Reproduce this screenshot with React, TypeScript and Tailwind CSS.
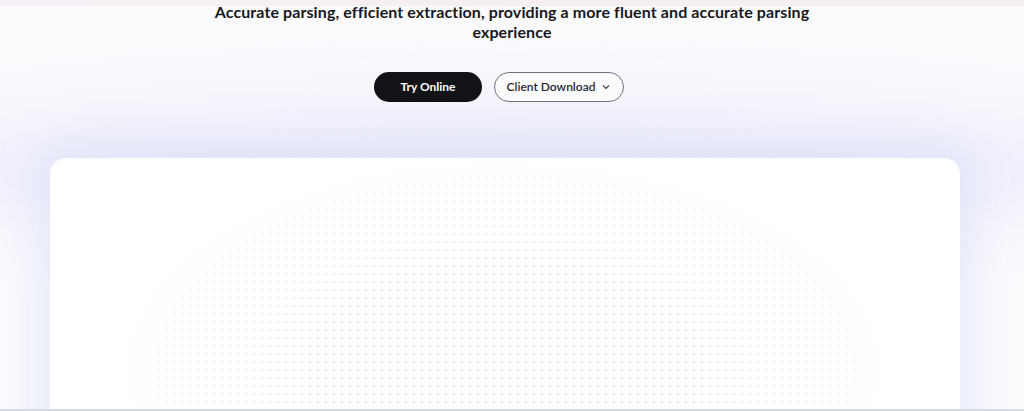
export default function App() {
  return (
    <div className="relative w-[1024px] h-[411px] overflow-hidden bg-[#fbfbfe]" style={{ fontFamily: 'Lato, "Noto Sans", sans-serif' }}>
      <div className="absolute inset-x-0 top-0 h-[6px] bg-gradient-to-r from-[#f6f0f6] via-[#f7eef2] to-[#f6eef0]" />
      <div className="absolute left-[-100px] right-[-100px] top-[110px] h-[120px] rounded-[50%] bg-[#e9e9fa] blur-[40px]" />
      <div className="relative flex flex-col items-center pt-[2px]">
        <h1 className="text-center text-[16px] leading-[20px] font-bold text-[#18181b] w-[640px] tracking-[0.1px]">
          Accurate parsing, efficient extraction, providing a more fluent and accurate parsing experience
        </h1>
        <div className="mt-[30px] flex gap-3 mr-[26px]">
          <button className="h-[30px] w-[108px] rounded-full bg-[#121316] text-white text-[12px] font-bold">Try Online</button>
          <button className="h-[30px] w-[130px] rounded-full border border-[#6b7280] bg-white/60 text-[#1f2937] text-[12px] font-semibold flex items-center justify-center gap-[6px]">
            Client Download
            <svg width="10" height="10" viewBox="0 0 10 10" fill="none" stroke="#374151" strokeWidth="1.2"><path d="M2 3.5 5 6.5 8 3.5" /></svg>
          </button>
        </div>
        <div className="mt-[56px] mr-[14px] w-[910px] h-[300px] rounded-[16px] bg-white shadow-[0_0_40px_10px_rgba(220,224,245,0.7)] relative overflow-hidden">
          <div className="absolute inset-0 bg-[radial-gradient(#e2e2e7_1.2px,transparent_1.3px)] bg-[size:8px_8px] [mask-image:radial-gradient(ellipse_48%_80%_at_50%_70%,black_45%,transparent_100%)]" />
        </div>
      </div>
      <div className="absolute inset-x-0 bottom-0 h-[2px] bg-[#d7dae0]" />
    </div>
  );
}
